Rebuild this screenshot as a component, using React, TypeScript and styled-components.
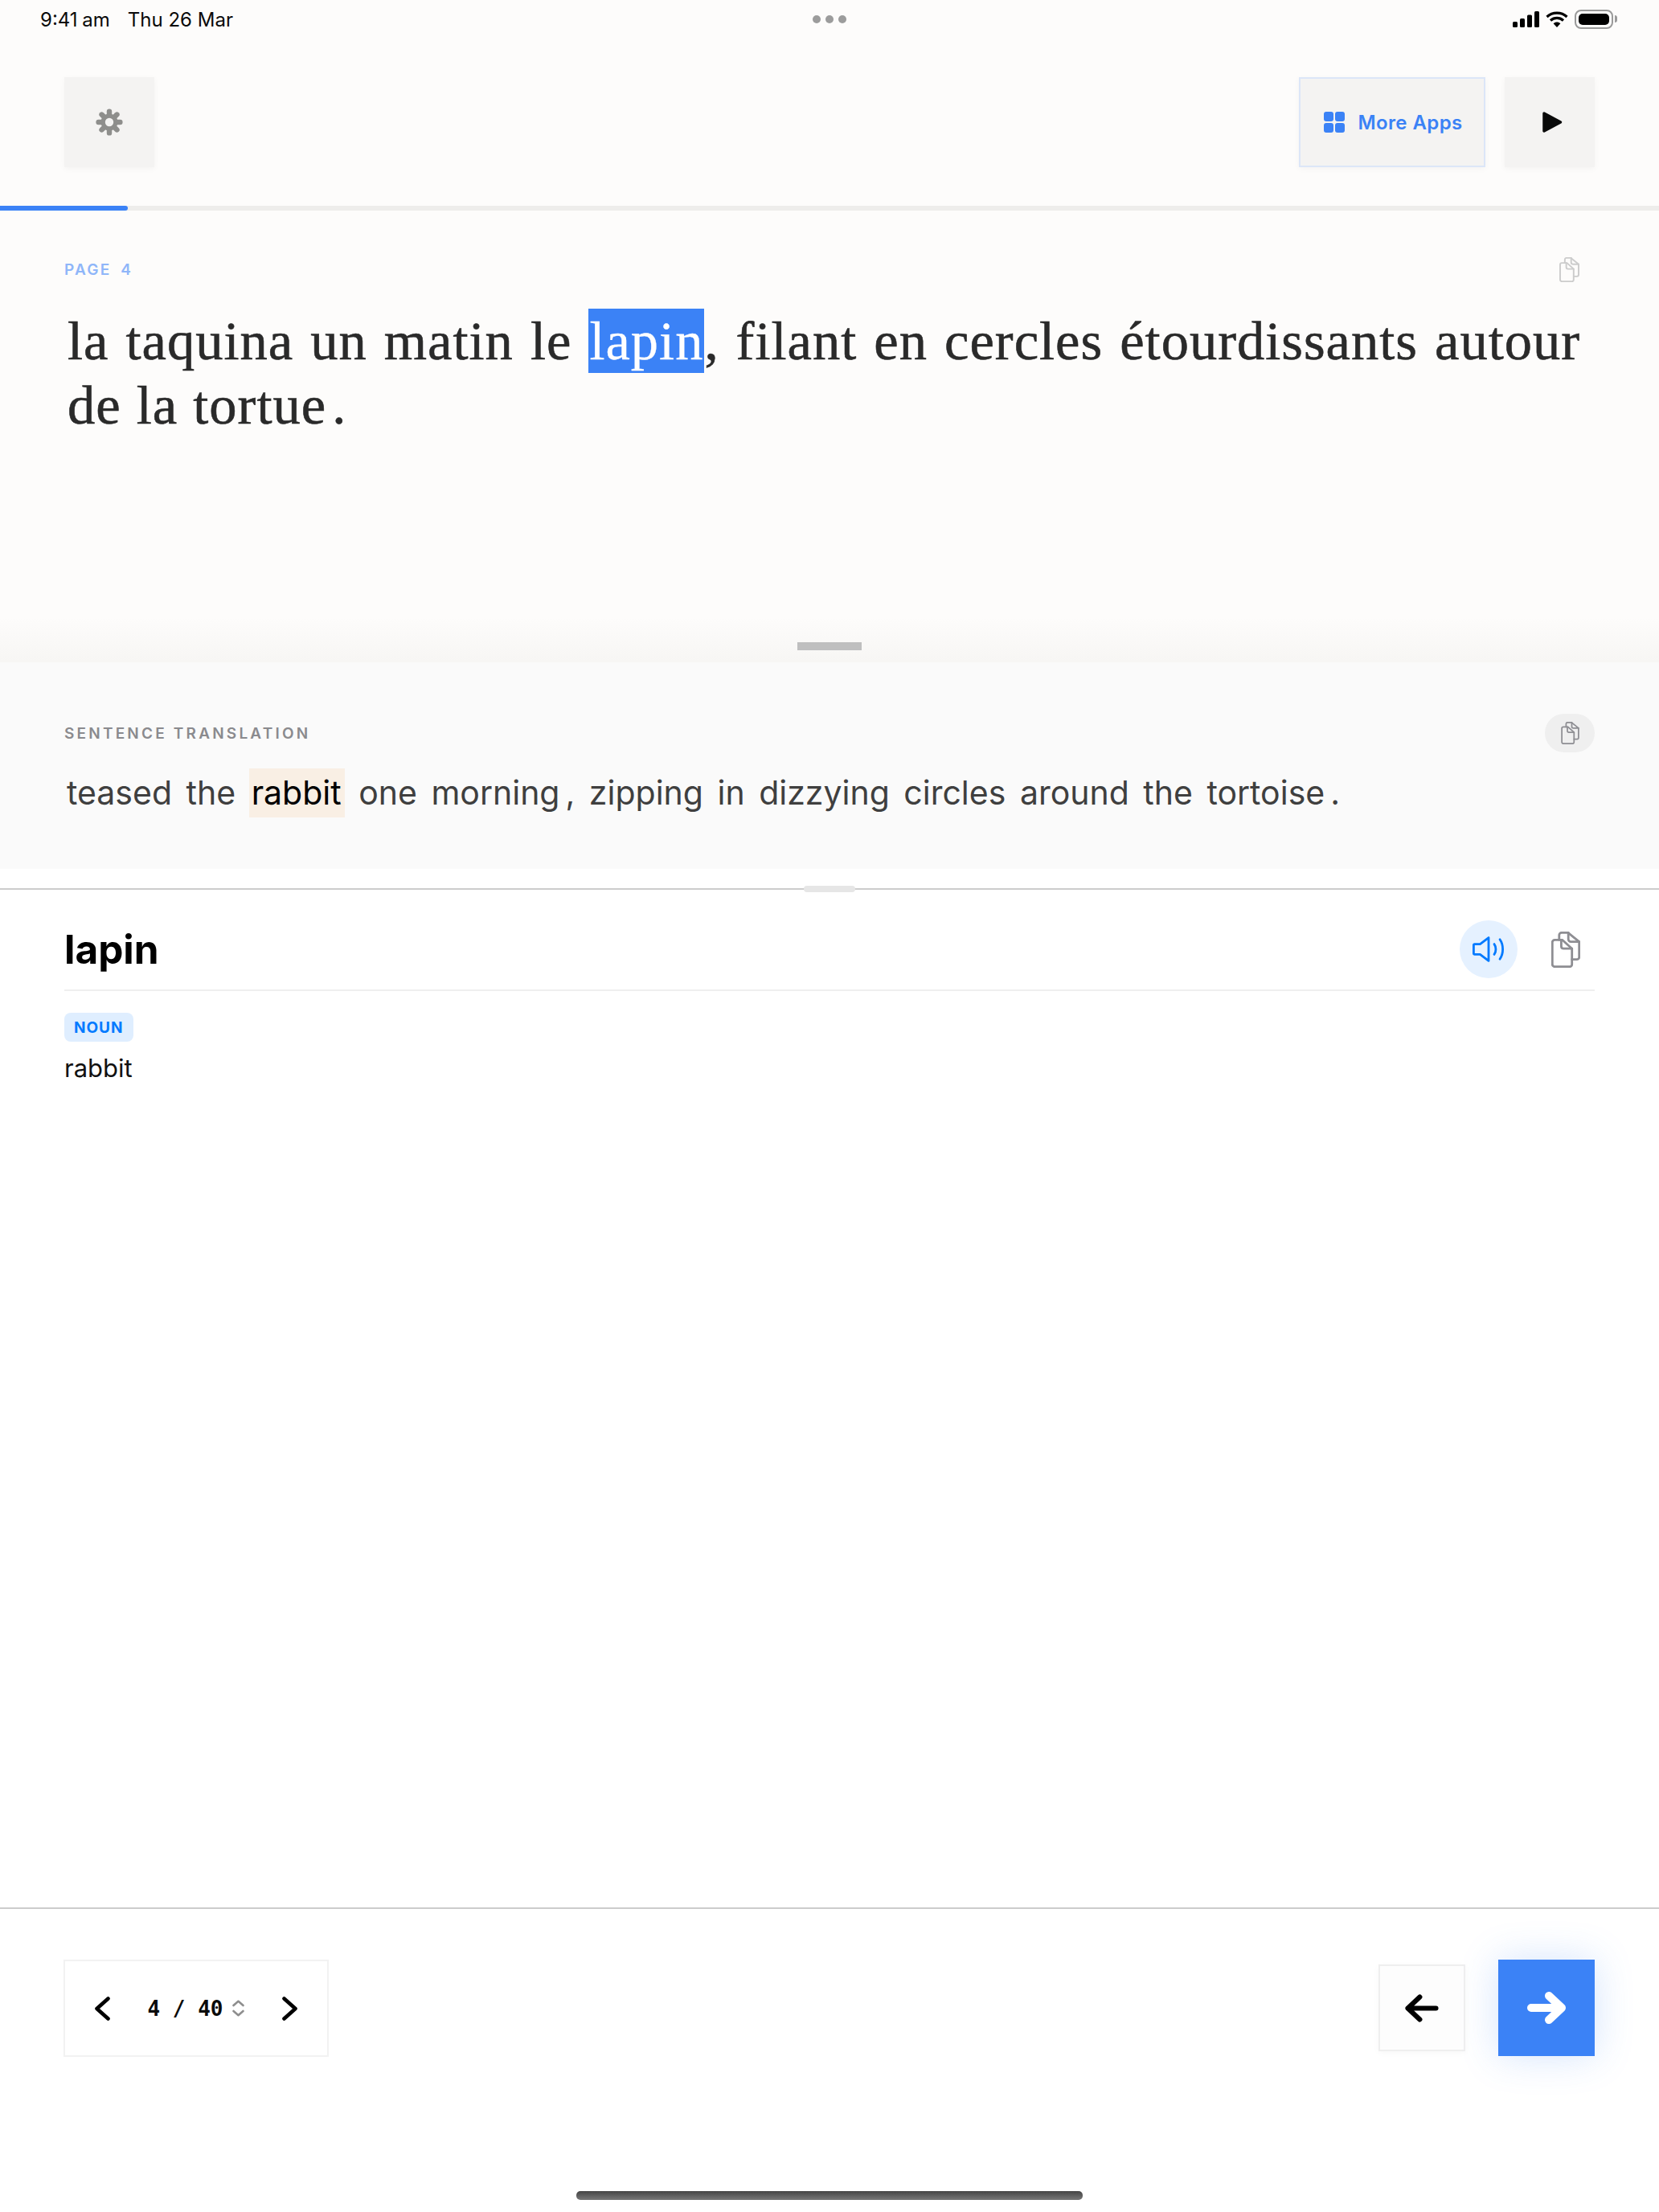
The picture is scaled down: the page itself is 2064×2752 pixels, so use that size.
import type { SVGProps } from 'react'
import styled, { createGlobalStyle } from 'styled-components'

const GlobalStyle = createGlobalStyle`
  html, body {
    margin: 0;
    padding: 0;
    background: #ffffff;
  }

  * {
    box-sizing: border-box;
  }
`

function GearIcon(props: SVGProps<SVGSVGElement>) {
  const angles = [0, 45, 90, 135, 180, 225, 270, 315]
  return (
    <svg viewBox="0 0 34 34" fill="none" aria-hidden="true" {...props}>
      {angles.map((angle) => (
        <path
          key={angle}
          d="M17 10V3.6"
          stroke="currentColor"
          strokeWidth="6.4"
          strokeLinecap="round"
          transform={`rotate(${angle} 17 17)`}
        />
      ))}
      <circle cx="17" cy="17" r="10.5" fill="currentColor" />
      <circle cx="17" cy="17" r="5.2" fill="#f4f3f2" />
    </svg>
  )
}

function GridIcon(props: SVGProps<SVGSVGElement>) {
  return (
    <svg viewBox="0 0 26 26" fill="currentColor" aria-hidden="true" {...props}>
      <rect x="0" y="0" width="12" height="12" rx="3" />
      <rect x="14" y="0" width="12" height="12" rx="3" />
      <rect x="0" y="14" width="12" height="12" rx="3" />
      <rect x="14" y="14" width="12" height="12" rx="3" />
    </svg>
  )
}

function PlayIcon(props: SVGProps<SVGSVGElement>) {
  return (
    <svg viewBox="0 0 25 28" fill="currentColor" aria-hidden="true" {...props}>
      <path
        d="M2 3L22.5 14L2 25Z"
        stroke="currentColor"
        strokeWidth="3.5"
        strokeLinejoin="round"
      />
    </svg>
  )
}

function CopyIcon(props: SVGProps<SVGSVGElement>) {
  return (
    <svg viewBox="0 0 36 45" fill="none" aria-hidden="true" {...props}>
      <g stroke="currentColor" strokeWidth="2.8" strokeLinejoin="round" strokeLinecap="round">
        <path d="M4.3 10.3H13.6L25.7 21.2V40.7C25.7 42.3 24.6 43.7 23 43.7H4.3C2.7 43.7 1.3 42.3 1.3 40.7V13.3C1.3 11.7 2.7 10.3 4.3 10.3Z" />
        <path d="M12.4 10.3V18.2C12.4 19.9 13.7 21.2 15.4 21.2H25.7" />
        <path d="M9.8 10.3V4.3C9.8 2.7 11.2 1.3 12.8 1.3H20.8L34.7 12.6V31.7C34.7 33.3 33.3 34.7 31.7 34.7H25.7" />
        <path d="M21.2 1.3V9.6C21.2 11.3 22.6 12.6 24.3 12.6H34.7" />
      </g>
    </svg>
  )
}

function SpeakerIcon(props: SVGProps<SVGSVGElement>) {
  return (
    <svg viewBox="0 0 40 32" fill="none" aria-hidden="true" {...props}>
      <g stroke="currentColor" strokeWidth="2.8" strokeLinejoin="round" strokeLinecap="round">
        <path d="M2.6 9.6H9.4L20 1.6V30.4L9.4 22.4H2.6C1.9 22.4 1.4 21.9 1.4 21.2V10.8C1.4 10.1 1.9 9.6 2.6 9.6Z" />
        <path d="M27 9.6C29.6 13 29.6 19 27 22.4" />
        <path d="M34 3.8C38.8 10.5 38.8 21.5 34 28.2" />
      </g>
    </svg>
  )
}

function ChevronIcon({ $flip, ...props }: SVGProps<SVGSVGElement> & { $flip?: boolean }) {
  return (
    <svg viewBox="0 0 19 30" fill="none" aria-hidden="true" {...props}>
      <path
        d={$flip ? 'M2.5 2.5L16.5 15L2.5 27.5' : 'M16.5 2.5L2.5 15L16.5 27.5'}
        stroke="currentColor"
        strokeWidth="4.6"
        strokeLinecap="round"
        strokeLinejoin="round"
      />
    </svg>
  )
}

function UpDownIcon(props: SVGProps<SVGSVGElement>) {
  return (
    <svg viewBox="0 0 15 21" fill="none" aria-hidden="true" {...props}>
      <path
        d="M1.5 7L7.5 1.8L13.5 7M1.5 14L7.5 19.2L13.5 14"
        stroke="currentColor"
        strokeWidth="2.6"
        strokeLinecap="round"
        strokeLinejoin="round"
      />
    </svg>
  )
}

function ArrowIcon({ $flip, ...props }: SVGProps<SVGSVGElement> & { $flip?: boolean }) {
  return (
    <svg viewBox="0 0 48 40" fill="none" aria-hidden="true" {...props}>
      <path
        d={$flip ? 'M5 20H43M27 5L43 20L27 35' : 'M44 20H4M21 4L4 20L21 36'}
        stroke="currentColor"
        strokeWidth={$flip ? 10 : 7}
        strokeLinecap="round"
        strokeLinejoin="round"
      />
    </svg>
  )
}

function SignalIcon(props: SVGProps<SVGSVGElement>) {
  return (
    <svg viewBox="0 0 33 20" fill="currentColor" aria-hidden="true" {...props}>
      <rect x="0" y="13" width="6" height="7" rx="1.5" />
      <rect x="9" y="9" width="6" height="11" rx="1.5" />
      <rect x="18" y="4.5" width="6" height="15.5" rx="1.5" />
      <rect x="27" y="0" width="6" height="20" rx="1.5" />
    </svg>
  )
}

function WifiIcon(props: SVGProps<SVGSVGElement>) {
  return (
    <svg viewBox="0 0 28 20" fill="none" aria-hidden="true" {...props}>
      <path d="M1.5 7C8.5 0.6 19.5 0.6 26.5 7" stroke="currentColor" strokeWidth="3.2" />
      <path d="M6 11.5C10.6 7.4 17.4 7.4 22 11.5" stroke="currentColor" strokeWidth="3.2" />
      <path d="M14 20L9.6 15.2C12.2 13 15.8 13 18.4 15.2Z" fill="currentColor" />
    </svg>
  )
}

export default function App() {
  return (
    <Page>
      <GlobalStyle />

      <StatusBar>
        <StatusTime>
          <span>9:41 am</span>
          <span>Thu 26 Mar</span>
        </StatusTime>
        <StatusDots>
          <i />
          <i />
          <i />
        </StatusDots>
        <StatusIcons>
          <SignalIcon width={33} height={20} />
          <WifiIcon width={28} height={20} />
          <Battery>
            <BatteryFill />
          </Battery>
        </StatusIcons>
      </StatusBar>

      <Toolbar>
        <ToolButton aria-label="Settings" $color="#8e8e8c">
          <GearIcon width={34} height={34} />
        </ToolButton>
        <ToolGroup>
          <MoreAppsButton>
            <GridIcon width={26} height={26} />
            More Apps
          </MoreAppsButton>
          <ToolButton aria-label="Play" $color="#0a0a0a">
            <PlayGlyph width={25} height={28} />
          </ToolButton>
        </ToolGroup>
      </Toolbar>

      <Progress>
        <ProgressFill style={{ width: `${(4 / 40) * 77}%` }} />
      </Progress>

      <Reader>
        <ReaderHeader>
          <PageLabel>PAGE 4</PageLabel>
          <ReaderCopy>
            <CopyIcon width={25} height={31} />
          </ReaderCopy>
        </ReaderHeader>
        <ReaderText>
          la taquina un matin le <Selected>lapin</Selected>, filant en cercles étourdissants autour de la tortue<Detached>.</Detached>
        </ReaderText>
        <ReaderHandle />
      </Reader>

      <Translation>
        <TranslationHeader>
          <TranslationLabel>SENTENCE TRANSLATION</TranslationLabel>
          <PillButton aria-label="Copy translation">
            <CopyIcon width={23} height={28} />
          </PillButton>
        </TranslationHeader>
        <TranslationText>
          teased the <Marked>rabbit</Marked> one morning<Detached>,</Detached> zipping in dizzying circles around the tortoise<Detached>.</Detached>
        </TranslationText>
      </Translation>

      <Dictionary>
        <DictionaryHandle />
        <WordRow>
          <Word>lapin</Word>
          <WordActions>
            <AudioButton aria-label="Listen">
              <SpeakerIcon width={40} height={32} />
            </AudioButton>
            <WordCopy aria-label="Copy word">
              <CopyIcon width={36} height={45} />
            </WordCopy>
          </WordActions>
        </WordRow>
        <Badge>NOUN</Badge>
        <Meaning>rabbit</Meaning>
      </Dictionary>

      <Footer>
        <Pager>
          <PagerArrow aria-label="Previous page">
            <ChevronIcon width={19} height={30} />
          </PagerArrow>
          <PagerCount>
            4 / 40
            <UpDownIcon width={15} height={21} />
          </PagerCount>
          <PagerArrow aria-label="Next page">
            <ChevronIcon $flip width={19} height={30} />
          </PagerArrow>
        </Pager>
        <FooterNav>
          <BackButton aria-label="Back">
            <ArrowIcon width={42} height={35} />
          </BackButton>
          <NextButton aria-label="Next">
            <ArrowIcon $flip width={48} height={40} />
          </NextButton>
        </FooterNav>
      </Footer>

      <HomeIndicator />
    </Page>
  )
}

const Page = styled.main`
  position: relative;
  display: flex;
  width: 2064px;
  height: 2752px;
  flex-direction: column;
  overflow: hidden;
  background: #ffffff;
  color: #000000;
  font-family: Inter, 'Liberation Sans', sans-serif;
`

const StatusBar = styled.div`
  position: relative;
  display: flex;
  height: 48px;
  flex: 0 0 48px;
  align-items: center;
  justify-content: space-between;
  padding: 0 57px 0 50px;
  background: #fdfcfb;
`

const StatusTime = styled.div`
  display: flex;
  gap: 22px;
  font-size: 24px;
  font-weight: 400;
  word-spacing: -1px;
  color: #0a0a0a;

  span:last-child {
    word-spacing: 0;
  }
`

const StatusDots = styled.div`
  position: absolute;
  top: 19px;
  left: 1011px;
  display: flex;
  gap: 6px;

  i {
    display: block;
    width: 10px;
    height: 10px;
    border-radius: 50%;
    background: #9c9c9c;
  }
`

const StatusIcons = styled.div`
  display: flex;
  align-items: center;
  gap: 8px;
  color: #000000;
`

const Battery = styled.div`
  position: relative;
  width: 48px;
  height: 24px;
  padding: 3px;
  border: 2px solid #9a9a9a;
  border-radius: 8px;

  &::after {
    content: '';
    position: absolute;
    top: 5px;
    right: -7px;
    width: 3px;
    height: 9px;
    border-radius: 0 3px 3px 0;
    background: #9a9a9a;
  }
`

const BatteryFill = styled.div`
  width: 100%;
  height: 100%;
  border-radius: 5px;
  background: #000000;
`

const Toolbar = styled.header`
  display: flex;
  height: 208px;
  flex: 0 0 208px;
  align-items: flex-start;
  justify-content: space-between;
  padding: 48px 80px 0;
  background: #fdfcfb;
`

const ToolGroup = styled.div`
  display: flex;
  gap: 24px;
`

const ToolButton = styled.button<{ $color: string }>`
  display: flex;
  width: 112px;
  height: 112px;
  align-items: center;
  justify-content: center;
  border: 0;
  padding: 0;
  background: #f4f3f2;
  box-shadow: 0 2px 8px rgb(0 0 0 / 4%);
  color: ${({ $color }) => $color};
`

const PlayGlyph = styled(PlayIcon)`
  margin-left: 7px;
`

const MoreAppsButton = styled.button`
  display: flex;
  width: 232px;
  height: 112px;
  align-items: center;
  justify-content: center;
  gap: 16px;
  border: 2px solid #dce6f8;
  padding: 0 0 0 3px;
  background: #f4f3f2;
  box-shadow: 0 2px 8px rgb(0 0 0 / 4%);
  color: #3b82f6;
  font: inherit;
  font-size: 24px;
  font-weight: 600;
  letter-spacing: 0.4px;
`

const Progress = styled.div`
  height: 6px;
  flex: 0 0 6px;
  background: #eeedeb;
`

const ProgressFill = styled.div`
  height: 100%;
  border-radius: 0 3px 3px 0;
  background: #3b82f6;
`

const Reader = styled.section`
  display: flex;
  height: 562px;
  flex: 0 0 562px;
  flex-direction: column;
  padding: 58px 80px 15px 80px;
  background: linear-gradient(to bottom, #fdfcfb 90%, #f7f6f4 100%);
`

const ReaderHeader = styled.div`
  display: flex;
  height: 30px;
  align-items: center;
  justify-content: space-between;
`

const PageLabel = styled.span`
  color: #8fb6f9;
  font-size: 19px;
  font-weight: 600;
  letter-spacing: 2.2px;
  word-spacing: 5px;
`

const ReaderCopy = styled.span`
  display: flex;
  margin-right: 19px;
  color: #cccccc;
`

const ReaderText = styled.p`
  margin: 34px 18px 0 4px;
  color: #2a2a2a;
  font-family: 'Liberation Serif', serif;
  font-size: 68.5px;
  font-weight: 400;
  line-height: 80px;
  letter-spacing: 1px;
  word-spacing: 1px;
  text-align: justify;
  -webkit-text-stroke: 0.6px #2a2a2a;
`

const Selected = styled.span`
  display: inline-block;
  padding: 0 1px;
  background: #3b82f6;
  color: #ffffff;
  -webkit-text-stroke: 0.3px #ffffff;
`

const Detached = styled.span`
  margin-left: 7px;
`

const ReaderHandle = styled.div`
  width: 80px;
  height: 10px;
  margin: auto auto 0;
  background: #bfbfbf;
`

const Translation = styled.section`
  display: flex;
  height: 257px;
  flex: 0 0 257px;
  flex-direction: column;
  padding: 64px 80px 0;
  background: #fafafa;
`

const TranslationHeader = styled.div`
  display: flex;
  height: 48px;
  align-items: center;
  justify-content: space-between;
`

const TranslationLabel = styled.span`
  color: #8a8a8e;
  font-size: 19px;
  font-weight: 600;
  letter-spacing: 3.2px;
`

const PillButton = styled.button`
  display: flex;
  width: 62px;
  height: 48px;
  align-items: center;
  justify-content: center;
  border: 0;
  border-radius: 24px;
  padding: 0;
  background: #efefef;
  color: #8e8e93;
`

const TranslationText = styled.p`
  margin: 20px 0 0 3px;
  color: #3f3f3f;
  font-size: 41px;
  font-weight: 400;
  line-height: 61px;
  word-spacing: 6px;
`

const Marked = styled.span`
  display: inline-block;
  margin-left: -1px;
  padding: 0 4px 0 3px;
  background: #f9efe4;
  color: #000000;
`

const Dictionary = styled.section`
  position: relative;
  display: flex;
  flex: 1;
  flex-direction: column;
  align-items: flex-start;
  margin-top: 24px;
  padding: 0 80px;
  border-top: 2px solid #cccccc;
`

const DictionaryHandle = styled.div`
  position: absolute;
  top: -5px;
  left: 1000px;
  width: 64px;
  height: 8px;
  border-radius: 4px;
  background: #e6e6e6;
`

const WordRow = styled.div`
  display: flex;
  width: 100%;
  height: 126px;
  align-items: center;
  justify-content: space-between;
  padding-top: 24px;
  border-bottom: 2px solid #efefef;
`

const Word = styled.h1`
  margin: 0;
  color: #000000;
  font-size: 49.5px;
  font-weight: 700;
`

const WordActions = styled.div`
  display: flex;
  align-items: center;
  gap: 42px;
  padding-right: 18px;
`

const AudioButton = styled.button`
  display: flex;
  width: 72px;
  height: 72px;
  align-items: center;
  justify-content: center;
  border: 0;
  border-radius: 50%;
  padding: 0;
  background: #e5f1ff;
  color: #007aff;
`

const WordCopy = styled.button`
  display: flex;
  border: 0;
  padding: 0;
  background: transparent;
  color: #8e8e93;
`

const Badge = styled.span`
  display: flex;
  height: 36px;
  align-items: center;
  margin-top: 27px;
  border-radius: 8px;
  padding: 0 12px;
  background: #dfeeff;
  color: #007aff;
  font-size: 19px;
  font-weight: 700;
  letter-spacing: 1px;
`

const Meaning = styled.p`
  margin: 11px 0 0;
  color: #111111;
  font-size: 31px;
  line-height: 44px;
`

const Footer = styled.footer`
  display: flex;
  height: 379px;
  flex: 0 0 379px;
  align-items: flex-start;
  justify-content: space-between;
  padding: 63px 80px 0 79px;
  border-top: 2px solid #cccccc;
`

const Pager = styled.div`
  display: flex;
  width: 330px;
  height: 121px;
  align-items: center;
  justify-content: space-between;
  border: 2px solid #f2f2f2;
  padding: 0 37px;
`

const PagerArrow = styled.button`
  display: flex;
  border: 0;
  padding: 0;
  background: transparent;
  color: #000000;
`

const PagerCount = styled.span`
  display: flex;
  align-items: center;
  gap: 12px;
  color: #0a0a0a;
  font-family: 'DejaVu Sans Mono', monospace;
  font-size: 26px;
  font-weight: 700;
  white-space: pre;

  svg {
    color: #8e8e8e;
  }
`

const FooterNav = styled.div`
  display: flex;
  align-items: center;
  gap: 41px;
`

const BackButton = styled.button`
  display: flex;
  width: 108px;
  height: 108px;
  align-items: center;
  justify-content: center;
  border: 2px solid #efefef;
  padding: 0;
  background: #fdfdfd;
  box-shadow: 0 2px 8px rgb(0 0 0 / 3%);
  color: #000000;
`

const NextButton = styled.button`
  display: flex;
  width: 120px;
  height: 120px;
  align-items: center;
  justify-content: center;
  border: 0;
  padding: 0;
  background: #3b82f6;
  box-shadow: 0 0 48px rgb(59 130 246 / 22%);
  color: #ffffff;
`

const HomeIndicator = styled.div`
  position: absolute;
  top: 2726px;
  left: 717px;
  width: 630px;
  height: 11px;
  border-radius: 5px;
  background: linear-gradient(to bottom, #444444, #777777);
`
